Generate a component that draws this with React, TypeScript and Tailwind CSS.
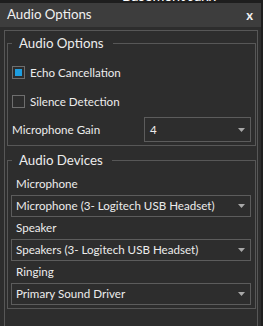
import React from "react";

const font = { fontFamily: 'Lato, "Noto Sans", sans-serif' };

function Arrow() {
  return (
    <svg width="7" height="4" viewBox="0 0 7 4" className="shrink-0">
      <path d="M0 0 H7 L3.5 4 Z" fill="#a8a8a8" />
    </svg>
  );
}

function Dropdown({ value, className }: { value: string; className: string }) {
  return (
    <div
      className={`flex items-center justify-between border border-[#5c5c5c] pl-[4px] pr-[5px] text-[11.6px] text-[#ececec] ${className}`}
    >
      <span className="whitespace-nowrap leading-none">{value}</span>
      <Arrow />
    </div>
  );
}

function Check({ checked, label }: { checked: boolean; label: string }) {
  return (
    <div className="flex h-[29px] items-center pl-[4px]">
      <div className="flex h-[13px] w-[13px] items-center justify-center border border-[#6e6e6e]">
        {checked && <div className="h-[7px] w-[7px] bg-[#1e9ee0]" />}
      </div>
      <span className="ml-[5px] text-[11.6px] leading-none text-[#ececec]">{label}</span>
    </div>
  );
}

function Legend({ text }: { text: string }) {
  return (
    <legend className="ml-[4px] pl-[7px] pr-[9px] text-[13.3px] leading-[19px] text-[#ececec]">
      {text}
    </legend>
  );
}

export default function App() {
  return (
    <div className="relative h-[326px] w-[263px] overflow-hidden bg-[#1e1e1e]" style={font}>
      <div className="relative h-[3px] overflow-hidden">
        <span className="absolute left-[122px] top-[-12px] whitespace-nowrap text-[14.5px] leading-[16px] text-white">
          Basement Jaxx
        </span>
      </div>
      <div className="flex h-[323px] w-[261px] flex-col bg-[#2d2d2d]">
        <div className="flex h-[24px] shrink-0 items-center justify-between bg-[#3d3d3d] pl-[7px] pr-[8px]">
          <span className="text-[13.3px] leading-none text-[#f0f0f0]">Audio Options</span>
          <span className="text-[13px] font-bold leading-none text-[#f0f0f0]">x</span>
        </div>
        <div className="flex-1 pl-[4px] pr-[3px] pt-[3px]">
          <div className="h-full border border-b-0 border-[#575757] pl-[2px] pr-[1px] pt-[3px]">
            <fieldset className="border border-[#575757]">
              <Legend text="Audio Options" />
              <div className="flex flex-col pb-[3px] pt-[5px]">
                <Check checked label="Echo Cancellation" />
                <Check checked={false} label="Silence Detection" />
                <div className="flex h-[26px] items-start pt-[1px]">
                  <span className="w-[136px] pl-[4px] pt-[7px] text-[11.6px] leading-none text-[#ececec]">
                    Microphone Gain
                  </span>
                  <Dropdown value="4" className="mr-[4px] h-[25px] flex-1 pl-[5px]" />
                </div>
              </div>
            </fieldset>
            <fieldset className="mt-[5px] border border-[#575757]">
              <Legend text="Audio Devices" />
              <div className="flex flex-col pb-[3px] pl-[3px] pr-[4px] pt-[3px]">
                <div className="flex h-[22px] items-center pl-[5px] text-[11.6px] leading-none text-[#ececec]">
                  Microphone
                </div>
                <Dropdown value="Microphone (3- Logitech USB Headset)" className="h-[22px]" />
                <div className="flex h-[22px] items-center pl-[5px] text-[11.6px] leading-none text-[#ececec]">
                  Speaker
                </div>
                <Dropdown value="Speakers (3- Logitech USB Headset)" className="h-[22px]" />
                <div className="flex h-[22px] items-center pl-[5px] text-[11.6px] leading-none text-[#ececec]">
                  Ringing
                </div>
                <Dropdown value="Primary Sound Driver" className="h-[22px]" />
              </div>
            </fieldset>
          </div>
        </div>
      </div>
    </div>
  );
}
